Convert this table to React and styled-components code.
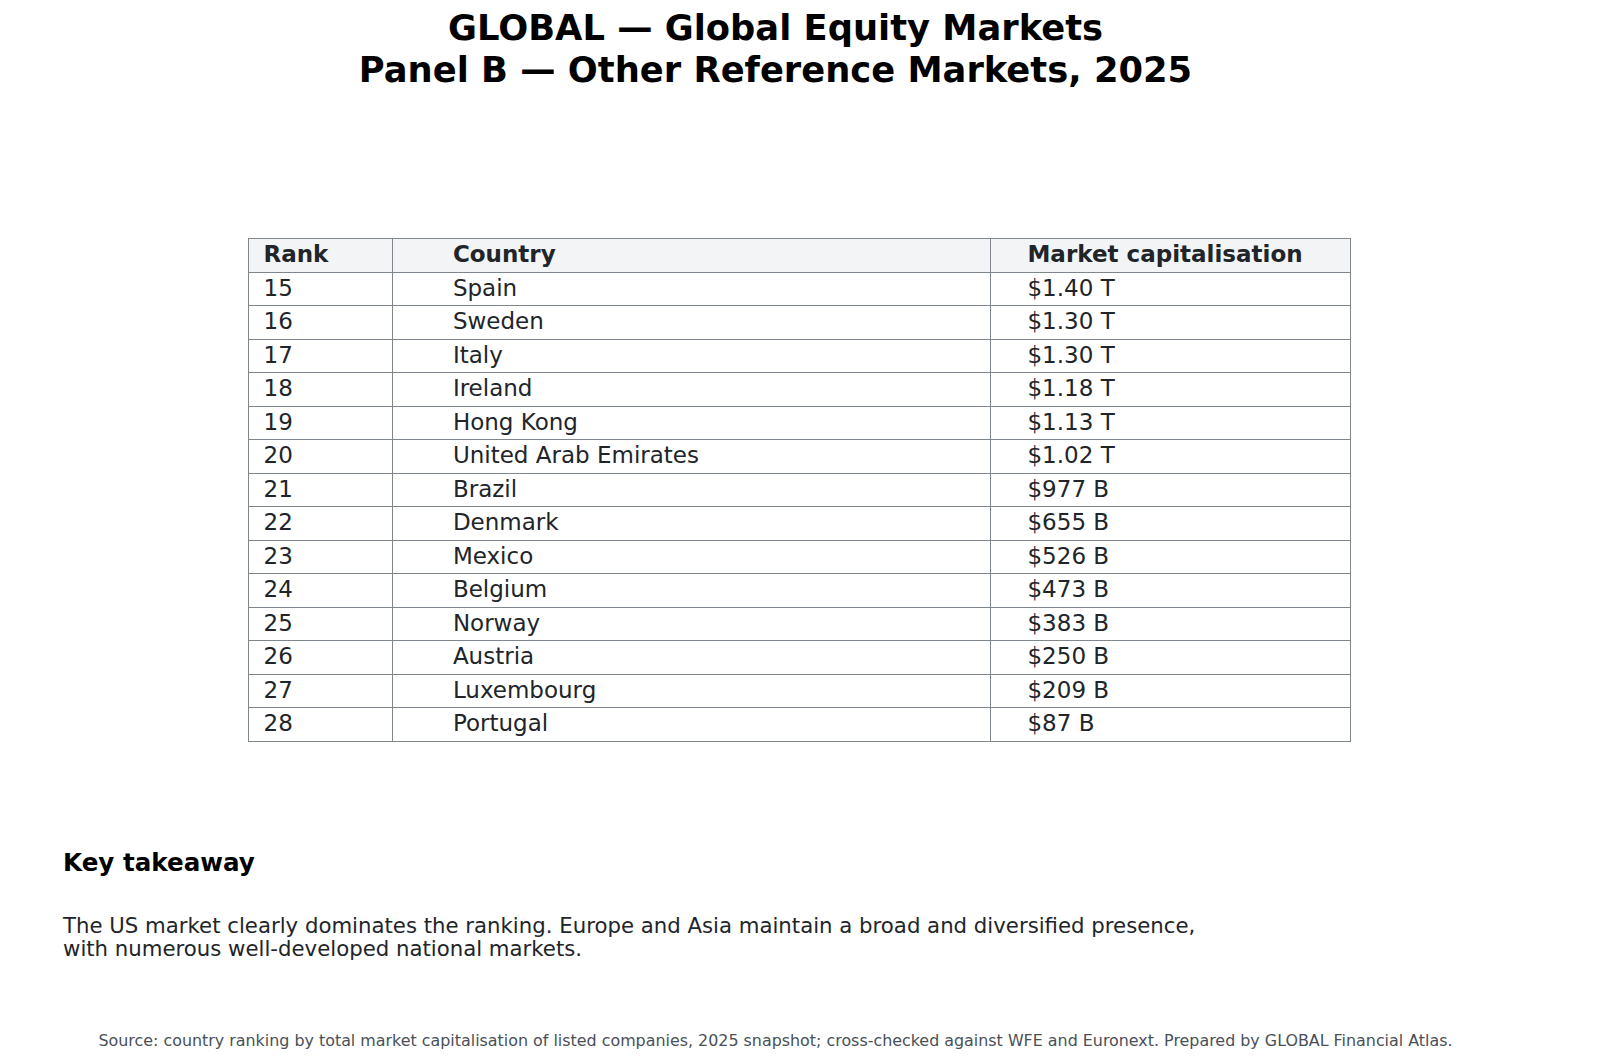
import React from "react";
import styled, { createGlobalStyle } from "styled-components";

const rows = [
  ["15", "Spain", "$1.40 T"],
  ["16", "Sweden", "$1.30 T"],
  ["17", "Italy", "$1.30 T"],
  ["18", "Ireland", "$1.18 T"],
  ["19", "Hong Kong", "$1.13 T"],
  ["20", "United Arab Emirates", "$1.02 T"],
  ["21", "Brazil", "$977 B"],
  ["22", "Denmark", "$655 B"],
  ["23", "Mexico", "$526 B"],
  ["24", "Belgium", "$473 B"],
  ["25", "Norway", "$383 B"],
  ["26", "Austria", "$250 B"],
  ["27", "Luxembourg", "$209 B"],
  ["28", "Portugal", "$87 B"],
];

// left padding per column (about a tenth of the column width)
const pads = [14.5, 59.5, 36.5];

export default function App() {
  return (
    <Page>
      <GlobalStyle />
      <Title>
        GLOBAL — Global Equity Markets
        <br />
        Panel B — Other Reference Markets, 2025
      </Title>

      <Table>
        <Cell $head $pad={pads[0]}>Rank</Cell>
        <Cell $head $pad={pads[1]}>Country</Cell>
        <Cell $head $pad={pads[2]}>Market capitalisation</Cell>
        {rows.map((r) =>
          r.map((v, i) => (
            <Cell key={r[0] + "-" + i} $pad={pads[i]}>
              {v}
            </Cell>
          ))
        )}
      </Table>

      <Takeaway>
        <H2>Key takeaway</H2>
        <Text>
          The US market clearly dominates the ranking. Europe and Asia maintain a broad and diversified presence,
          <br />
          with numerous well-developed national markets.
        </Text>
      </Takeaway>

      <Source>
        Source: country ranking by total market capitalisation of listed companies, 2025 snapshot; cross-checked against WFE and Euronext. Prepared by GLOBAL Financial Atlas.
      </Source>
    </Page>
  );
}

const GlobalStyle = createGlobalStyle`
  html, body {
    margin: 0;
    padding: 0;
    background: #ffffff;
  }
  body {
    font-family: "DejaVu Sans", "Liberation Sans", sans-serif;
  }
`;

const Page = styled.div`
  width: 1600px;
  height: 1062px;
  overflow: hidden;
  background: #ffffff;
  display: flex;
  flex-direction: column;
`;

const Title = styled.h1`
  width: 1551px;
  margin: 0;
  padding-top: 7px;
  text-align: center;
  font-size: 35.3px;
  line-height: 42px;
  font-weight: bold;
  color: #000000;
`;

const Table = styled.div`
  display: grid;
  grid-template-columns: 144.4px 597.6px 360.5px;
  grid-auto-rows: 33.5px;
  margin: 147px 0 0 248px;
  width: max-content;
  border-top: 1px solid #80868d;
  border-left: 1px solid #80868d;
`;

const Cell = styled.div`
  box-sizing: border-box;
  border-right: 1px solid #80868d;
  border-bottom: 1px solid #80868d;
  padding-left: ${(p) => p.$pad}px;
  padding-bottom: 1px;
  font-size: 23px;
  line-height: 31.5px;
  white-space: nowrap;
  color: #212529;
  font-weight: ${(p) => (p.$head ? "bold" : "normal")};
  background: ${(p) => (p.$head ? "#f3f4f6" : "#ffffff")};
`;

const Takeaway = styled.div`
  margin: 107px 0 0 63px;
`;

const H2 = styled.h2`
  margin: 0;
  font-size: 24.6px;
  line-height: 28px;
  font-weight: bold;
  color: #000000;
`;

const Text = styled.p`
  margin: 37px 0 0;
  font-size: 21.25px;
  line-height: 23px;
  color: #212529;
`;

const Source = styled.div`
  width: 1551px;
  margin-top: 71px;
  text-align: center;
  font-size: 15.9px;
  line-height: 19px;
  color: #495057;
  white-space: nowrap;
`;
